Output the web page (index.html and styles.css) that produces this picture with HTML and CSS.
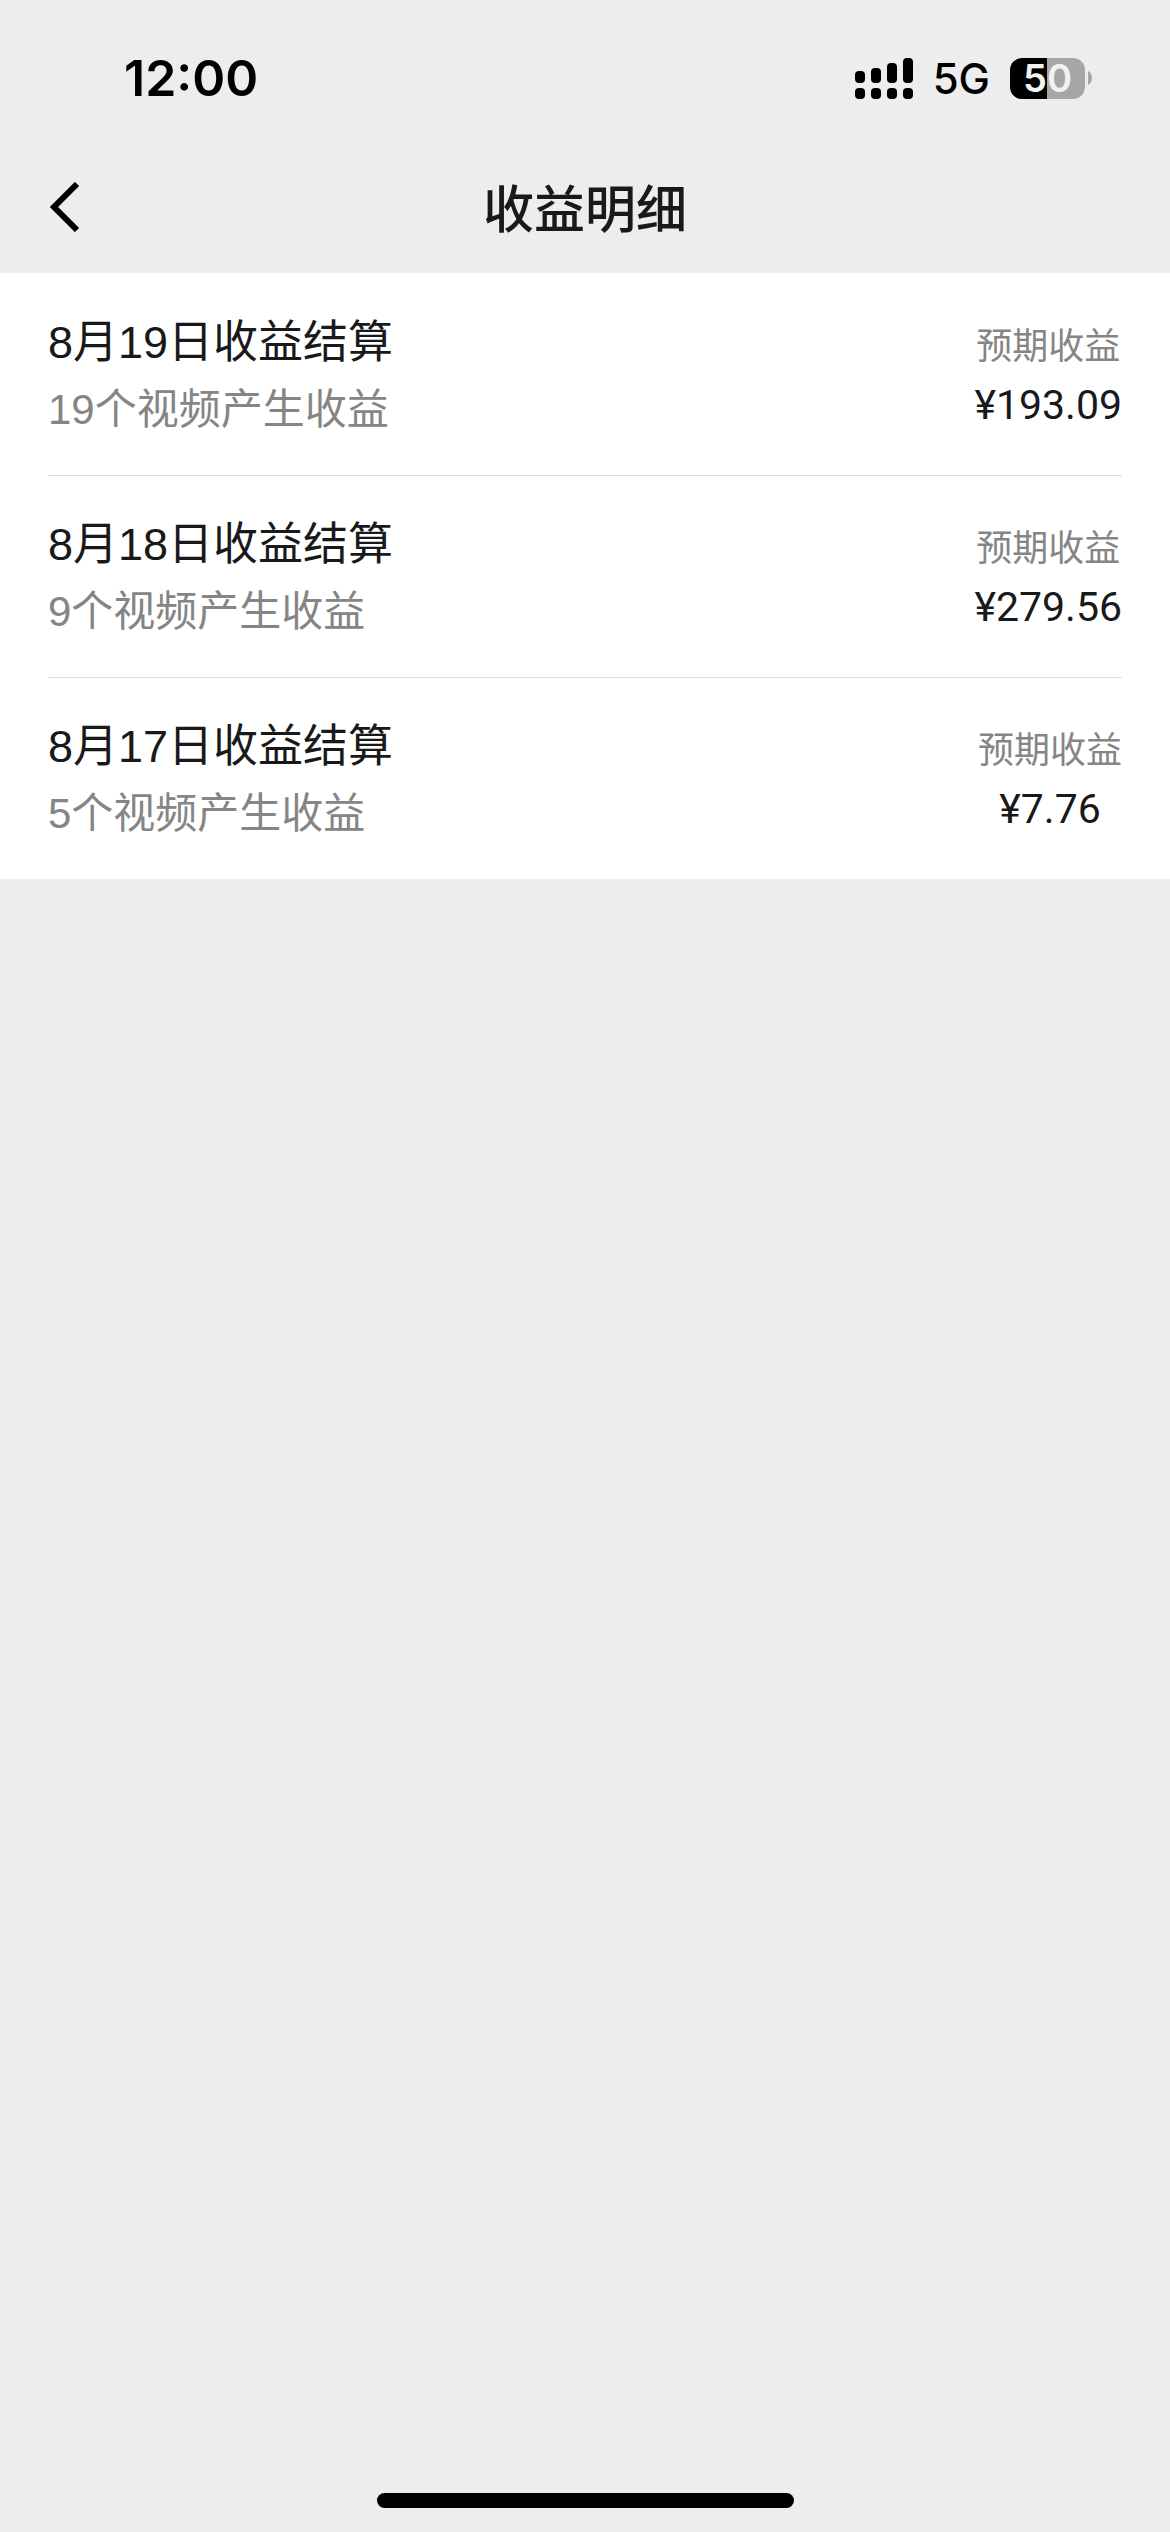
FILE: index.html
```html
<!DOCTYPE html>
<html lang="zh-CN">
<head>
    <meta charset="UTF-8">
    <meta name="viewport" content="width=device-width, initial-scale=1.0">
    <title>收益明细</title>
    <link rel="stylesheet" href="styles.css">
</head>
<body>
    <!-- Status bar -->
    <div class="status-bar">
        <time class="clock">12:00</time>
        <div class="status-icons">
            <svg class="signal" viewBox="0 0 58 41" width="58" height="41" aria-hidden="true">
                <rect x="0" y="13" width="10" height="12" rx="4"/>
                <rect x="16" y="10" width="10" height="15" rx="4"/>
                <rect x="32" y="5" width="10" height="20" rx="4"/>
                <rect x="48" y="0" width="10" height="25" rx="4"/>
                <rect x="0" y="30" width="10" height="11" rx="4"/>
                <rect x="16" y="30" width="10" height="11" rx="4"/>
                <rect x="32" y="30" width="10" height="11" rx="4"/>
                <rect x="48" y="30" width="10" height="11" rx="4"/>
            </svg>
            <span class="network">5G</span>
            <div class="battery">
                <span class="battery-level">50</span>
                <svg class="battery-cap" viewBox="0 0 4 14" width="4" height="14" aria-hidden="true">
                    <path d="M0 0C2 1 4 3 4 7S2 13 0 14Z"/>
                </svg>
            </div>
        </div>
    </div>

    <!-- Page header -->
    <header class="nav-bar">
        <button type="button" class="back" aria-label="返回">
            <svg viewBox="0 0 32 50" width="32" height="50" aria-hidden="true">
                <path d="M29 2L6 25L29 48"/>
            </svg>
        </button>
        <h1>收益明细</h1>
    </header>

    <!-- Income list -->
    <main>
        <ul class="income-list">
            <li class="income-item">
                <div class="info">
                    <h2>8月19日收益结算</h2>
                    <p>19个视频产生收益</p>
                </div>
                <div class="income">
                    <p class="label">预期收益</p>
                    <p class="amount">¥193.09</p>
                </div>
            </li>
            <li class="income-item">
                <div class="info">
                    <h2>8月18日收益结算</h2>
                    <p>9个视频产生收益</p>
                </div>
                <div class="income">
                    <p class="label">预期收益</p>
                    <p class="amount">¥279.56</p>
                </div>
            </li>
            <li class="income-item">
                <div class="info">
                    <h2>8月17日收益结算</h2>
                    <p>5个视频产生收益</p>
                </div>
                <div class="income">
                    <p class="label">预期收益</p>
                    <p class="amount">¥7.76</p>
                </div>
            </li>
        </ul>
    </main>

    <div class="home-indicator"></div>
</body>
</html>
```
FILE: styles.css
```css
* {
    box-sizing: border-box;
    margin: 0;
    padding: 0;
}

body {
    min-height: 100vh;
    display: flex;
    flex-direction: column;
    background-color: #ededed;
    color: #191919;
    font-family: "Liberation Sans", "Noto Sans CJK SC", sans-serif;
}

/* Status bar */
.status-bar {
    display: flex;
    justify-content: space-between;
    align-items: center;
    height: 156px;
    padding: 0 78px 0 124px;
    color: #000;
    font-family: Inter, sans-serif;
}

.clock {
    font-size: 50px;
    font-weight: 600;
}

.status-icons {
    display: flex;
    align-items: center;
    gap: 20px;
}

.network {
    font-size: 42px;
    font-weight: 500;
}

.battery {
    display: flex;
    align-items: center;
    gap: 3px;
}

.battery-level {
    width: 75px;
    border-radius: 12px;
    background: linear-gradient(to right, #000 50%, #a6a6a6 50%);
    color: #f2f2f2;
    font-size: 38px;
    font-weight: 600;
    line-height: 41px;
    text-align: center;
}

.battery-cap {
    fill: #a6a6a6;
}

/* Page header */
.nav-bar {
    display: grid;
    grid-template-columns: 1fr auto 1fr;
    align-items: center;
    height: 117px;
    padding: 0 48px 8px;
}

.nav-bar h1 {
    font-size: 51px;
    font-weight: 500;
    line-height: 72px;
}

.back {
    justify-self: start;
    display: flex;
    padding-bottom: 8px;
    border: none;
    background: none;
    cursor: pointer;
}

.back svg {
    fill: none;
    stroke: #000;
    stroke-width: 6;
}

/* Income list */
.income-list {
    padding: 0 48px;
    background-color: #fff;
    list-style: none;
}

.income-item {
    display: flex;
    justify-content: space-between;
    align-items: center;
    padding: 36px 0 32px;
}

.income-item + .income-item {
    padding-top: 35px;
    border-top: 1px solid #dedede;
}

.info h2 {
    font-size: 45px;
    font-weight: 400;
    line-height: 67px;
}

.info p {
    color: #858585;
    font-size: 42px;
    line-height: 67px;
}

.income {
    text-align: center;
    line-height: 58px;
}

.label {
    color: #858585;
    font-size: 36px;
}

.amount {
    font-family: Roboto, sans-serif;
    font-size: 41px;
}

.home-indicator {
    width: 417px;
    height: 15px;
    margin: auto auto 24px;
    border-radius: 8px;
    background-color: #000;
}
```
